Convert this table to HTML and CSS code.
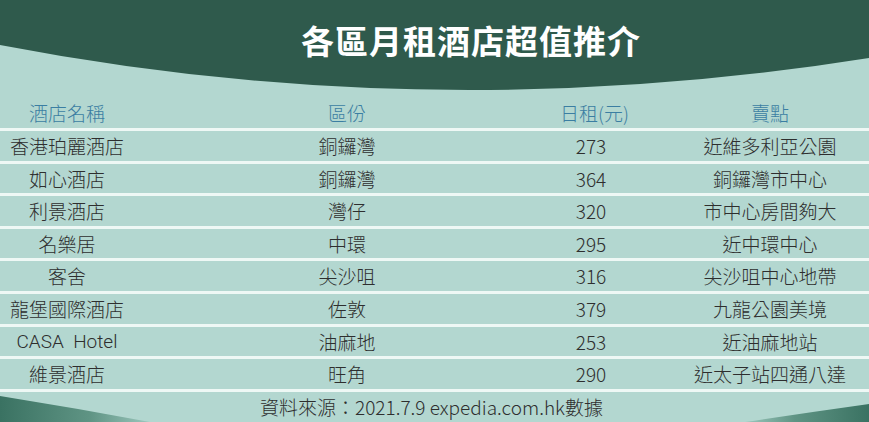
FILE: index.html
```html
<!DOCTYPE html>
<html lang="zh-Hant">
<head>
<meta charset="utf-8">
<title>各區月租酒店超值推介</title>
<link rel="stylesheet" href="styles.css">
</head>
<body>
<div class="page">
  <svg class="bg" width="869" height="422" viewBox="0 0 869 422" aria-hidden="true">
    <defs>
      <linearGradient id="gl" x1="0" y1="0" x2="1" y2="0">
        <stop offset="0" stop-color="#3a7262"/>
        <stop offset="0.6" stop-color="#5f9484"/>
        <stop offset="1" stop-color="#9cc7bd"/>
      </linearGradient>
      <linearGradient id="gr" x1="1" y1="0" x2="0" y2="0">
        <stop offset="0" stop-color="#3a7262"/>
        <stop offset="0.6" stop-color="#5f9484"/>
        <stop offset="1" stop-color="#9cc7bd"/>
      </linearGradient>
    </defs>
    <path d="M0,0 H869 V58 Q430,128 0,45 Z" fill="#2f5a4c"/>
    <path d="M0,396 Q75,408 150,422 L0,422 Z" fill="url(#gl)"/>
    <path d="M869,404 Q805,413 745,422 L869,422 Z" fill="url(#gr)"/>
  </svg>
  <div class="content">
    <h1 class="title">各區月租酒店超值推介</h1>
    <div class="table">
      <div class="row head">
        <div class="c1">酒店名稱</div>
        <div class="c2">區份</div>
        <div class="c3">日租(元)</div>
        <div class="c4">賣點</div>
      </div>
      <div class="row">
        <div class="c1">香港珀麗酒店</div>
        <div class="c2">銅鑼灣</div>
        <div class="c3">273</div>
        <div class="c4">近維多利亞公園</div>
      </div>
      <div class="row">
        <div class="c1">如心酒店</div>
        <div class="c2">銅鑼灣</div>
        <div class="c3">364</div>
        <div class="c4">銅鑼灣市中心</div>
      </div>
      <div class="row">
        <div class="c1">利景酒店</div>
        <div class="c2">灣仔</div>
        <div class="c3">320</div>
        <div class="c4">市中心房間夠大</div>
      </div>
      <div class="row">
        <div class="c1">名樂居</div>
        <div class="c2">中環</div>
        <div class="c3">295</div>
        <div class="c4">近中環中心</div>
      </div>
      <div class="row">
        <div class="c1">客舍</div>
        <div class="c2">尖沙咀</div>
        <div class="c3">316</div>
        <div class="c4">尖沙咀中心地帶</div>
      </div>
      <div class="row">
        <div class="c1">龍堡國際酒店</div>
        <div class="c2">佐敦</div>
        <div class="c3">379</div>
        <div class="c4">九龍公園美境</div>
      </div>
      <div class="row">
        <div class="c1 latin">CASA&nbsp; Hotel</div>
        <div class="c2">油麻地</div>
        <div class="c3">253</div>
        <div class="c4">近油麻地站</div>
      </div>
      <div class="row">
        <div class="c1">維景酒店</div>
        <div class="c2">旺角</div>
        <div class="c3">290</div>
        <div class="c4">近太子站四通八達</div>
      </div>
    </div>
    <p class="source">資料來源：2021.7.9 expedia.com.hk數據</p>
  </div>
</div>
</body>
</html>
```

FILE: styles.css
```css
* { box-sizing: border-box; }
html, body { margin: 0; padding: 0; }
body {
  background: #b3d7d0;
  font-family: "Noto Sans CJK TC", "Noto Sans", sans-serif;
  color: #2e2e2e;
}
.page {
  position: relative;
  width: 869px;
  height: 422px;
  overflow: hidden;
  background: #b3d7d0;
}
.bg {
  position: absolute;
  left: 0;
  top: 0;
  display: block;
}
.content {
  position: relative;
  display: flex;
  flex-direction: column;
}
.title {
  margin: 0;
  height: 98px;
  padding: 20px 0 0 73px;
  text-align: center;
  color: #ffffff;
  font-size: 33px;
  font-weight: 700;
  letter-spacing: 1px;
  line-height: 40px;
}
.table {
  display: flex;
  flex-direction: column;
}
.row {
  display: grid;
  grid-template-columns: 134px 426px 62px 247px;
  height: 32.6px;
  border-bottom: 3px solid #eef8f5;
  align-items: center;
  font-size: 19px;
  font-weight: 300;
  line-height: 29.6px;
}
.row.head {
  height: 33px;
  color: #3b7ea2;
}
.row > div {
  text-align: center;
  white-space: nowrap;
}
.c1 { padding-left: 0; }
.c4 { padding-left: 49px; }
.latin { font-family: "Roboto", "Noto Sans", sans-serif; font-weight: 300; }
.source {
  margin: 0;
  height: 30px;
  line-height: 30px;
  text-align: center;
  font-size: 19px;
  font-weight: 300;
  padding-right: 6px;
}
```
